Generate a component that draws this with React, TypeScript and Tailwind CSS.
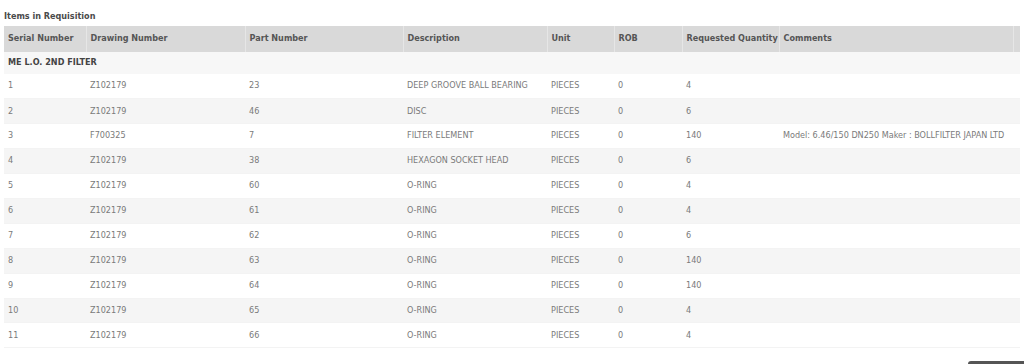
const columns = [
  { label: "Serial Number", w: "w-[82px]" },
  { label: "Drawing Number", w: "w-[159px]" },
  { label: "Part Number", w: "w-[158px]" },
  { label: "Description", w: "w-[144px]" },
  { label: "Unit", w: "w-[67px]" },
  { label: "ROB", w: "w-[68px]" },
  { label: "Requested Quantity", w: "w-[97px]" },
  { label: "Comments", w: "w-[234px]" },
  { label: "", w: "" },
];

const items = [
  ["1", "Z102179", "23", "DEEP GROOVE BALL BEARING", "PIECES", "0", "4", ""],
  ["2", "Z102179", "46", "DISC", "PIECES", "0", "6", ""],
  ["3", "F700325", "7", "FILTER ELEMENT", "PIECES", "0", "140", "Model: 6.46/150 DN250 Maker : BOLLFILTER JAPAN LTD"],
  ["4", "Z102179", "38", "HEXAGON SOCKET HEAD", "PIECES", "0", "6", ""],
  ["5", "Z102179", "60", "O-RING", "PIECES", "0", "4", ""],
  ["6", "Z102179", "61", "O-RING", "PIECES", "0", "4", ""],
  ["7", "Z102179", "62", "O-RING", "PIECES", "0", "6", ""],
  ["8", "Z102179", "63", "O-RING", "PIECES", "0", "140", ""],
  ["9", "Z102179", "64", "O-RING", "PIECES", "0", "140", ""],
  ["10", "Z102179", "65", "O-RING", "PIECES", "0", "4", ""],
  ["11", "Z102179", "66", "O-RING", "PIECES", "0", "4", ""],
];

export default function App() {
  return (
    <div className="relative h-[364px] w-[1024px] overflow-hidden bg-white px-1 pt-[10px] font-['DejaVu_Sans_Condensed','DejaVu_Sans',sans-serif] text-[9px]">
      <p className="h-[16px] font-bold text-[#4a4a4a]">Items in Requisition</p>
      <table className="w-[1016px] table-fixed border-collapse">
        <thead>
          <tr className="h-[26px] bg-[#d9d9d9] text-left text-[#555]">
            {columns.map((c, i) => (
              <th
                key={i}
                className={`${c.w} whitespace-nowrap border-r border-[#e6e6e6] px-1 font-bold last:border-r-0`}
              >
                {c.label}
              </th>
            ))}
          </tr>
        </thead>
        <tbody className="text-[#7a7a7a]">
          <tr className="h-[22px] bg-[#f7f7f7]">
            <td colSpan={9} className="px-1 font-bold text-[#444]">
              ME L.O. 2ND FILTER
            </td>
          </tr>
          {items.map((row, r) => (
            <tr
              key={r}
              className={`h-[24.9px] border-b border-[#f3f3f3] ${r % 2 === 1 ? "bg-[#f5f5f5]" : "bg-white"}`}
            >
              {row.map((cell, i) => (
                <td key={i} className="truncate px-1">
                  {cell}
                </td>
              ))}
              <td />
            </tr>
          ))}
        </tbody>
      </table>
      <div className="absolute bottom-0 right-0 h-[3px] w-[56px] rounded-tl-sm bg-[#555]" />
    </div>
  );
}
